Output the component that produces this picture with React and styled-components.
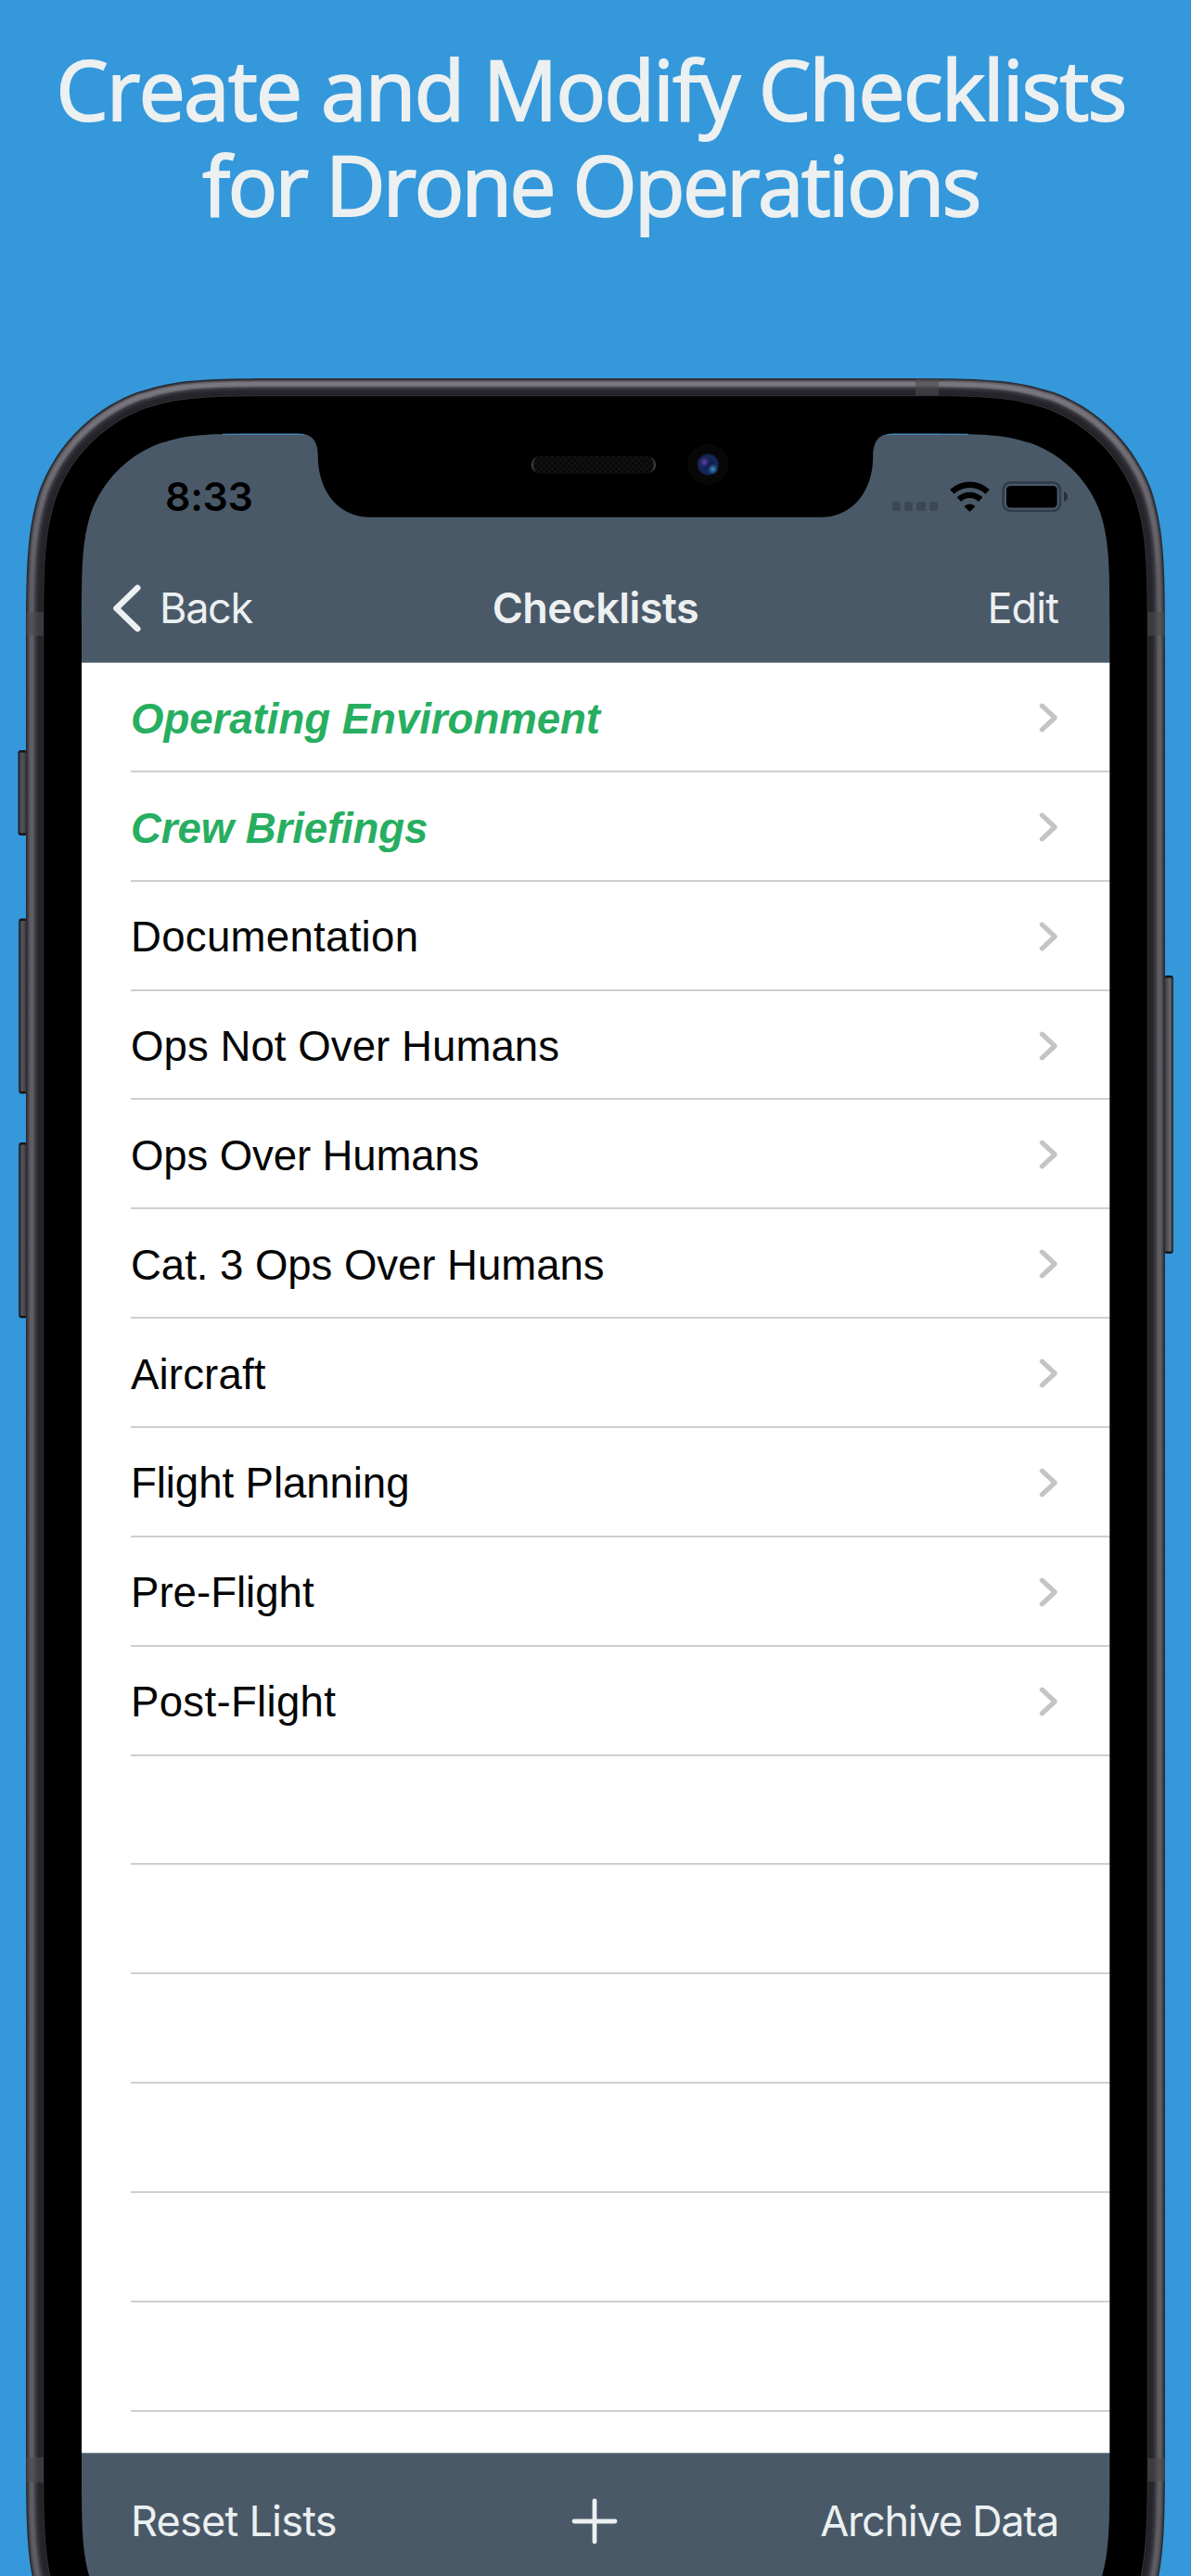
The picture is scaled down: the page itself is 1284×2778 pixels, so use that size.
import React from 'react';
import styled, { createGlobalStyle } from 'styled-components';

const GlobalStyle = createGlobalStyle`
  * { box-sizing: border-box; }
  body { margin: 0; background: #3498db; }
`;

const colors = {
  sky: '#3498db',
  slate: '#4a5968',
  cloud: '#ecf0f1',
  green: '#27ae60',
  line: '#cfcfd1',
  chevron: '#c4c4c6',
};

const Page = styled.main`
  width: 1284px;
  height: 2778px;
  overflow: hidden;
  display: flex;
  flex-direction: column;
  background: ${colors.sky};
`;

const Headline = styled.h1`
  flex: none;
  height: 408px;
  margin: 0;
  padding: 44px 10px 0 0;
  text-align: center;
  color: ${colors.cloud};
  font: 500 89px/103px 'Open Sans', 'Noto Sans', sans-serif;
  -webkit-text-stroke: 2px ${colors.cloud};
`;

const HeadlineLine = styled.span`
  display: block;
  white-space: nowrap;
  letter-spacing: ${(p) => p.$tracking}px;
`;

const Device = styled.section`
  position: relative;
  flex: none;
  width: 1284px;
  height: 2370px;
  padding: 59px 87px 0 88px;
`;

const DeviceArt = styled.svg`
  position: absolute;
  inset: 0;
  pointer-events: none;
`;

const Screen = styled.div`
  height: 100%;
  display: flex;
  flex-direction: column;
  background: ${colors.slate};
`;

const StatusBar = styled.header`
  flex: none;
  height: 136px;
  display: flex;
  justify-content: space-between;
  align-items: center;
  padding: 0 46px 0 90px;
`;

const Time = styled.span`
  font: 600 43px/44px Inter, sans-serif;
  letter-spacing: ${(p) => p.$tracking}px;
  color: #000;
`;

const StatusIcons = styled.div`
  display: flex;
  align-items: flex-end;
`;

const SignalDots = styled.div`
  display: flex;
  gap: 4px;
  margin: 0 13px 1px 0;
`;

const SignalDot = styled.i`
  width: 9.3px;
  height: 9.5px;
  border-radius: 2.5px;
  background: #3c4856;
`;

const WifiGlyph = styled.svg`
  width: 43px;
  height: 33px;
  margin-right: 13px;
`;

const BatteryGlyph = styled.svg`
  width: 71px;
  height: 33px;
`;

const NavBar = styled.nav`
  flex: none;
  height: 112px;
  display: grid;
  grid-template-columns: 1fr auto 1fr;
  align-items: start;
  padding: 25px 56px 0 33px;
  border-bottom: 1px solid #84909a;
`;

const NavTitle = styled.h2`
  margin: 0;
  font: 600 45px/56px Inter, sans-serif;
  letter-spacing: ${(p) => p.$tracking}px;
  color: ${colors.cloud};
  transform: translateX(11px);
`;

const BarButton = styled.button`
  display: flex;
  align-items: center;
  gap: 19px;
  justify-self: ${(p) => p.$side};
  padding: 0;
  border: 0;
  background: none;
  font: 400 45px/56px Inter, sans-serif;
  letter-spacing: ${(p) => p.$tracking}px;
  color: ${colors.cloud};
  white-space: nowrap;
`;

const BackGlyph = styled.svg`
  width: 32px;
  height: 52px;
`;

const List = styled.ul`
  flex: 1;
  min-height: 0;
  overflow: hidden;
  margin: 0;
  padding: 0 0 0 53px;
  list-style: none;
  background: #fff;
`;

const Row = styled.li`
  height: 117.87px;
  display: flex;
  align-items: center;
  justify-content: space-between;
  padding: 2px 56px 0 0;
  border-bottom: 2px solid ${colors.line};
`;

const RowLabel = styled.span`
  font: ${(p) => (p.$accent ? 'italic 700' : '400')} 45.6px/54px 'Liberation Sans', Arial, sans-serif;
  color: ${(p) => (p.$accent ? colors.green : '#050505')};
  letter-spacing: ${(p) => p.$tracking}px;
  padding-top: ${(p) => (p.$accent ? 5 : 3)}px;
`;

const RowChevron = styled.svg`
  width: 22px;
  height: 34px;
`;

const Toolbar = styled.footer`
  flex: none;
  height: 133px;
  display: grid;
  grid-template-columns: 1fr auto 1fr;
  align-items: start;
  padding: 45px 56px 0 53px;
  border-top: 1px solid #84909a;
`;

const PlusGlyph = styled.svg`
  width: 50px;
  height: 50px;
  margin-top: 3px;
`;

/* Rounded rectangle with continuous (smoothed) corners. */
function squircle(x0, y0, x1, y1, r) {
  const corner = [
    [1.528665, 0], [1.08849296, 0], [0.86840694, 0], [0.66993427, 0.0654955],
    [0.63149399, 0.07491100],
    [0.37282392, 0.16905899], [0.16906013, 0.37282401], [0.07491100, 0.63149399],
    [0, 0.86840701], [0, 1.08849299], [0, 1.52866483],
  ];
  const rev = [...corner].reverse();
  const place = (pts, sx, sy, ox, oy) =>
    pts.map(([a, b]) => `${(ox + sx * a * r).toFixed(2)} ${(oy + sy * b * r).toFixed(2)}`);
  const curve = (p) =>
    `L${p[0]}C${p[1]} ${p[2]} ${p[3]}L${p[4]}C${p[5]} ${p[6]} ${p[7]}C${p[8]} ${p[9]} ${p[10]}`;
  const curveRev = (p) =>
    `L${p[0]}C${p[1]} ${p[2]} ${p[3]}C${p[4]} ${p[5]} ${p[6]}L${p[7]}C${p[8]} ${p[9]} ${p[10]}`;
  const tl = curveRev(place(rev, 1, 1, x0, y0));
  const tr = curve(place(corner, -1, 1, x1, y0));
  const br = curveRev(place(rev, -1, -1, x1, y1));
  const bl = curve(place(corner, 1, -1, x0, y1));
  return `${tl.replace('L', 'M')}${tr}${br}${bl}Z`;
}

const rimLayers = [
  [0, '#29292f'], [1.2, '#3b3a40'], [2.4, 'url(#rimA)'], [4, 'url(#rimB)'],
  [8, 'url(#rimA)'], [9.5, '#3e3d44'], [11, '#302f36'], [13, '#26252c'],
  [17, '#201f26'], [18, '#333233'],
];

const rim = (i) => squircle(28 + i, i, 1256 - i, 2522 - i, 192 - i * 0.92);
const hole = squircle(88, 59.6, 1196.3, 2462, 135);

const sideButtons = [
  { x: 19.5, y: 401, w: 10, h: 92, left: true },
  { x: 20.3, y: 582.5, w: 9, h: 189, left: true },
  { x: 20.3, y: 824, w: 9, h: 189.5, left: true },
  { x: 1255, y: 644, w: 9.8, h: 300, left: false },
];

const bands = [
  [28.5, 252, 18.5, 25.5], [1237.5, 252, 18.5, 25.5],
  [987, 0.5, 25, 18], [28.5, 2242, 18.5, 27.5], [1237.5, 2243, 18.5, 25],
];

function DeviceFrame() {
  return (
    <DeviceArt width="1284" height="2370" viewBox="0 0 1284 2370" aria-hidden="true">
      <defs>
        <linearGradient id="rimA" gradientUnits="userSpaceOnUse" x1="0" y1="0" x2="0" y2="220">
          <stop offset="0" stopColor="#66636a" />
          <stop offset="1" stopColor="#4e4d53" />
        </linearGradient>
        <linearGradient id="rimB" gradientUnits="userSpaceOnUse" x1="0" y1="0" x2="0" y2="220">
          <stop offset="0" stopColor="#7a777e" />
          <stop offset="1" stopColor="#5e5d63" />
        </linearGradient>
        <linearGradient id="keyL" x1="0" x2="1" y1="0" y2="0">
          <stop offset="0" stopColor="#1c1c20" />
          <stop offset="0.3" stopColor="#55545a" />
          <stop offset="0.6" stopColor="#4a494f" />
          <stop offset="1" stopColor="#302f34" />
        </linearGradient>
        <linearGradient id="keyR" x1="1" x2="0" y1="0" y2="0">
          <stop offset="0" stopColor="#26262a" />
          <stop offset="0.3" stopColor="#68676c" />
          <stop offset="0.65" stopColor="#504f55" />
          <stop offset="1" stopColor="#38373c" />
        </linearGradient>
        <pattern id="mesh" width="6" height="6" patternUnits="userSpaceOnUse">
          <rect width="6" height="6" fill="#080808" />
          <path d="M0 0h3v3h-3zM3 3h3v3h-3z" fill="#111" />
        </pattern>
        <linearGradient id="slot" x1="0" x2="1" y1="0" y2="0">
          <stop offset="0" stopColor="#4a4a4a" />
          <stop offset="0.05" stopColor="#0a0a0a" />
          <stop offset="0.95" stopColor="#0a0a0a" />
          <stop offset="1" stopColor="#4a4a4a" />
        </linearGradient>
        <radialGradient id="lens">
          <stop offset="0" stopColor="#0d1848" />
          <stop offset="0.8" stopColor="#14295a" />
          <stop offset="1" stopColor="#0c1730" />
        </radialGradient>
        <radialGradient id="violet">
          <stop offset="0" stopColor="#6a45a8" />
          <stop offset="1" stopColor="#4a2f90" stopOpacity="0" />
        </radialGradient>
        <radialGradient id="cyan">
          <stop offset="0" stopColor="#4296c4" />
          <stop offset="1" stopColor="#2a78b0" stopOpacity="0" />
        </radialGradient>
      </defs>

      {sideButtons.map((b) => (
        <g key={b.y}>
          <rect x={b.x} y={b.y} width={b.w} height={b.h} rx="3" fill="#17171a" />
          <rect
            x={b.left ? b.x + 0.5 : b.x}
            y={b.y + 2.5}
            width={b.w - 0.5}
            height={b.h - 5}
            rx="2"
            fill={b.left ? 'url(#keyL)' : 'url(#keyR)'}
          />
        </g>
      ))}

      {rimLayers.map(([inset, fill]) => (
        <path key={inset} d={`${rim(inset)}${rim(19.6)}`} fillRule="evenodd" fill={fill} />
      ))}
      {bands.map(([x, y, w, h]) => (
        <rect key={`${x}-${y}`} x={x} y={y} width={w} height={h} fill="#4c4b4d" fillOpacity="0.6" />
      ))}
      <path d={`${rim(19.2)}${hole}`} fillRule="evenodd" fill="#000" />

      <path d="M240 60.3H328M956 60.3H1044" stroke="#3f88bd" strokeWidth="1.3" />
      <path
        d="M322 58V59.6C337 59.6 342.8 69 342.8 84C342.8 123 366 149.8 399 149.8H885C918 149.8 941.2 123 941.2 84C941.2 69 947 59.6 962 59.6V58Z"
        fill="#000"
      />

      <rect x="572.8" y="83.5" width="134.2" height="19.4" rx="9.7" fill="url(#slot)" />
      <rect x="575" y="84" width="129.8" height="18.4" rx="9.2" fill="url(#mesh)" />
      <circle cx="763.3" cy="93" r="22" fill="#070707" />
      <circle cx="763.3" cy="93" r="11.8" fill="url(#lens)" />
      <circle cx="759.5" cy="90.5" r="6" fill="url(#violet)" />
      <circle cx="768.5" cy="98" r="6" fill="url(#cyan)" />
    </DeviceArt>
  );
}

const Wifi = () => (
  <WifiGlyph viewBox="0 0 43 33">
    <g fill="none" stroke="#000" strokeWidth="6.4">
      <path d="M2.4 11.4A27.6 27.6 0 0 1 40.6 11.4" />
      <path d="M9.8 19.6A16.8 16.8 0 0 1 33.2 19.6" />
    </g>
    <path d="M21.5 33L15.4 27A8.7 8.7 0 0 1 27.6 27Z" fill="#000" />
  </WifiGlyph>
);

const Battery = () => (
  <BatteryGlyph viewBox="0 0 71 33">
    <rect x="1.5" y="1.4" width="61.5" height="30.6" rx="8" fill="none" stroke="#303c49" strokeWidth="2.6" />
    <rect x="5" y="5" width="54.6" height="23.4" rx="4.2" fill="#000" />
    <path d="M67 11Q71 12.5 71 16.5Q71 20.5 67 22Z" fill="#26303a" />
  </BatteryGlyph>
);

const Back = () => (
  <BackGlyph viewBox="0 0 32 52">
    <path d="M27.2 4L4.5 26L27.2 48" fill="none" stroke={colors.cloud} strokeWidth="6.6" strokeLinecap="round" strokeLinejoin="round" />
  </BackGlyph>
);

const Chevron = () => (
  <RowChevron viewBox="0 0 22 34">
    <path d="M4.4 4.2L18.2 17L4.4 29.8" fill="none" stroke={colors.chevron} strokeWidth="5.2" strokeLinecap="round" strokeLinejoin="round" />
  </RowChevron>
);

const checklists = [
  { label: 'Operating Environment', accent: true, tracking: -0.03 },
  { label: 'Crew Briefings', accent: true, tracking: -0.1 },
  { label: 'Documentation', tracking: 0.28 },
  { label: 'Ops Not Over Humans', tracking: 0.05 },
  { label: 'Ops Over Humans', tracking: -0.14 },
  { label: 'Cat. 3 Ops Over Humans', tracking: -0.06 },
  { label: 'Aircraft', tracking: 0.15 },
  { label: 'Flight Planning', tracking: -0.08 },
  { label: 'Pre-Flight', tracking: 0 },
  { label: 'Post-Flight', tracking: 0.3 },
];

const emptyRows = Array.from({ length: 6 }, (_, i) => i);

export default function App() {
  return (
    <>
      <GlobalStyle />
      <Page>
        <Headline>
          <HeadlineLine $tracking={-1.6}>Create and Modify Checklists</HeadlineLine>
          <HeadlineLine $tracking={-2.6}>for Drone Operations</HeadlineLine>
        </Headline>
        <Device>
          <Screen>
            <StatusBar>
              <Time $tracking={-0.4}>8:33</Time>
              <StatusIcons>
                <SignalDots>
                  <SignalDot /><SignalDot /><SignalDot /><SignalDot />
                </SignalDots>
                <Wifi />
                <Battery />
              </StatusIcons>
            </StatusBar>
            <NavBar>
              <BarButton $side="start" $tracking={-1.3}>
                <Back />
                Back
              </BarButton>
              <NavTitle $tracking={-0.5}>Checklists</NavTitle>
              <BarButton $side="end" $tracking={-0.9}>Edit</BarButton>
            </NavBar>
            <List>
              {checklists.map((item) => (
                <Row key={item.label}>
                  <RowLabel $accent={item.accent} $tracking={item.tracking}>{item.label}</RowLabel>
                  <Chevron />
                </Row>
              ))}
              {emptyRows.map((n) => <Row key={n} />)}
            </List>
            <Toolbar>
              <BarButton $side="start" $tracking={-0.75}>Reset Lists</BarButton>
              <PlusGlyph viewBox="0 0 50 50">
                <path d="M25 3V47M3 25H47" stroke={colors.cloud} strokeWidth="4.8" strokeLinecap="round" />
              </PlusGlyph>
              <BarButton $side="end" $tracking={-1.25}>Archive Data</BarButton>
            </Toolbar>
          </Screen>
          <DeviceFrame />
        </Device>
      </Page>
    </>
  );
}
